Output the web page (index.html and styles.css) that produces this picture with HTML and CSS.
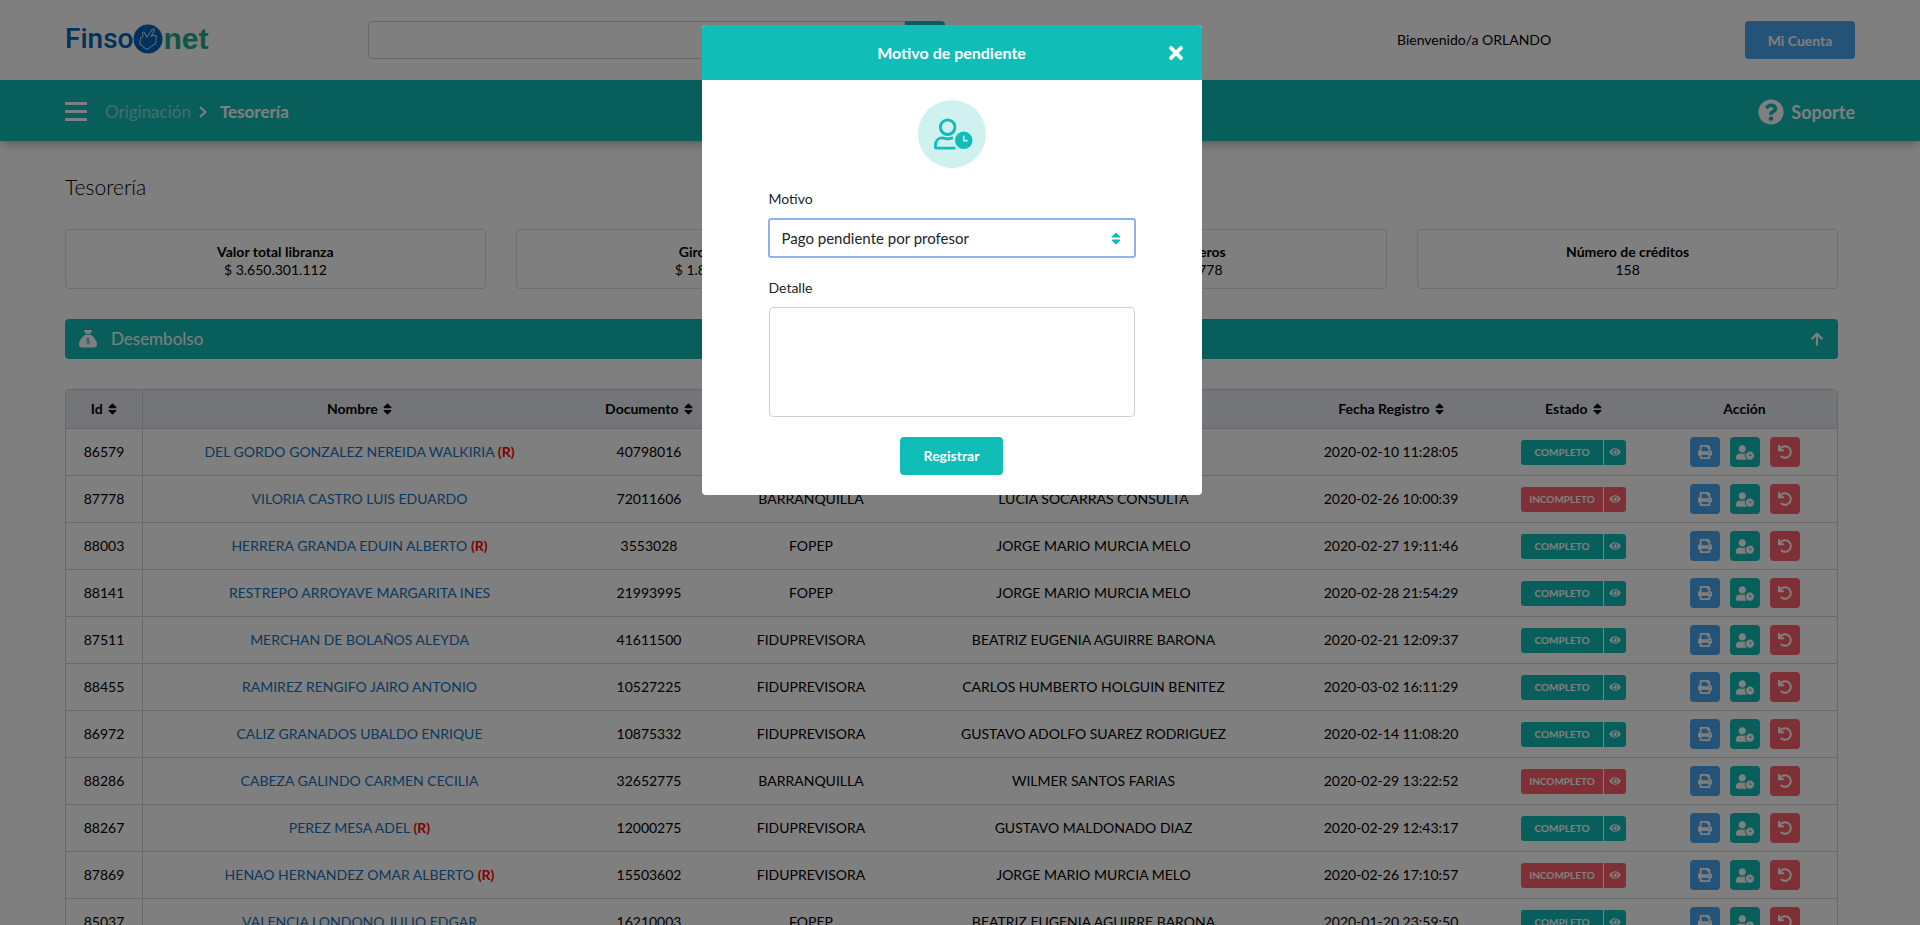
FILE: index.html
```html
<!DOCTYPE html>
<html lang="es">
<head>
<meta charset="utf-8">
<title>Finsonet - Tesorería</title>
<link rel="stylesheet" href="styles.css">
</head>
<body>
<svg class="sprite" aria-hidden="true">
  <symbol id="sort" viewBox="0 0 320 512"><path d="M41 288h238c21.4 0 32.1 25.9 17 41L177 448c-9.4 9.4-24.6 9.4-33.9 0L24 329c-15.1-15.1-4.4-41 17-41zm255-105L177 64c-9.4-9.4-24.6-9.4-33.9 0L24 183c-15.1 15.1-4.4 41 17 41h238c21.4 0 32.1-25.9 17-41z"/></symbol>
  <symbol id="eye" viewBox="0 0 576 512"><path d="M572.52 241.4C518.29 135.59 410.93 64 288 64S57.68 135.64 3.48 241.41a32.35 32.35 0 0 0 0 29.19C57.71 376.41 165.07 448 288 448s230.32-71.64 284.52-177.41a32.35 32.35 0 0 0 0-29.19zM288 400a144 144 0 1 1 144-144 143.93 143.93 0 0 1-144 144zm0-240a95.31 95.31 0 0 0-25.31 3.79 47.85 47.85 0 0 1-66.9 66.9A95.78 95.78 0 1 0 288 160z"/></symbol>
  <symbol id="print" viewBox="0 0 512 512"><path d="M448 192V77.25c0-8.49-3.37-16.62-9.37-22.63L393.37 9.37c-6-6-14.14-9.37-22.63-9.37H96C78.33 0 64 14.33 64 32v160c-35.35 0-64 28.65-64 64v112c0 8.84 7.16 16 16 16h48v96c0 17.67 14.33 32 32 32h320c17.67 0 32-14.33 32-32v-96h48c8.84 0 16-7.16 16-16V256c0-35.35-28.65-64-64-64zm-64 256H128v-96h256v96zm0-224H128V64h192v48c0 8.84 7.16 16 16 16h48v96zm48 72c-13.25 0-24-10.75-24-24 0-13.26 10.75-24 24-24s24 10.74 24 24c0 13.25-10.75 24-24 24z"/></symbol>
  <symbol id="clock" viewBox="0 0 640 512"><path d="M496 224c-79.6 0-144 64.4-144 144s64.4 144 144 144 144-64.4 144-144-64.4-144-144-144zm64 150.3c0 5.3-4.4 9.7-9.7 9.7h-60.6c-5.3 0-9.7-4.4-9.7-9.7v-76.6c0-5.3 4.4-9.7 9.7-9.7h12.6c5.3 0 9.7 4.4 9.7 9.7V352h38.3c5.3 0 9.7 4.4 9.7 9.7v12.6zM320 368c0-27.8 6.7-54.1 18.2-77.5-8-1.5-16.2-2.5-24.6-2.5h-16.7c-22.2 10.2-46.9 16-72.9 16s-50.6-5.8-72.9-16h-16.7C60.2 288 0 348.2 0 422.4V464c0 26.5 21.5 48 48 48h347.1c-45.3-31.9-75.1-84.5-75.1-144zm-96-112c70.7 0 128-57.3 128-128S294.7 0 224 0 96 57.3 96 128s57.3 128 128 128z"/></symbol>
  <symbol id="undo" viewBox="0 0 512 512"><path d="M212.333 224.333H12c-6.627 0-12-5.373-12-12V12C0 5.373 5.373 0 12 0h48c6.627 0 12 5.373 12 12v78.112C117.773 39.279 184.26 7.47 258.175 8.007c136.906.994 246.448 111.623 246.157 248.532C504.041 393.258 393.12 504 256.333 504c-64.089 0-122.496-24.313-166.51-64.215-5.099-4.622-5.334-12.554-.467-17.42l33.967-33.967c4.474-4.474 11.662-4.717 16.401-.525C170.76 415.336 211.58 432 256.333 432c97.268 0 176-78.716 176-176 0-97.267-78.716-176-176-176-58.496 0-110.28 28.476-142.274 72.333h98.274c6.627 0 12 5.373 12 12v48c0 6.627-5.373 12-12 12z"/></symbol>
</svg>

<header class="topbar">
  <a class="logo" href="#" aria-label="Finsonet">
    <span class="logo-a">Finso</span>
    <svg class="logo-mark" viewBox="0 0 30 30"><circle cx="15" cy="15" r="14.500" fill="#0062b4"/><path d="M13.500 13.500 19.500 5.200q1.800-1 2 .8L18 12.500l1.500-1.500q1.500-.5 1.700 1.200l1.500-.6q1 .4.600 2l-.8 6-8.500 6-7-5.600.5-5.500 2.500-2.500-.5-3q1.500-1.500 2.500 0l1.500 3.500" fill="none" stroke="#e4f0fa" stroke-width="1.100" stroke-dasharray="1.600 .5"/></svg>
    <span class="logo-b">net</span>
  </a>
  <form class="search">
    <input class="search-input" type="text" aria-label="Buscar">
    <button class="search-button" type="button" aria-label="Buscar"></button>
  </form>
  <p class="welcome">Bienvenido/a ORLANDO</p>
  <button class="account" type="button">Mi Cuenta</button>
</header>

<nav class="navbar">
  <button class="burger" type="button" aria-label="Menú"><span></span><span></span><span></span></button>
  <a class="crumb" href="#">Originación</a>
  <svg class="chevron" viewBox="0 0 8 12"><path d="M1 1l5.500 5L1 11" fill="none" stroke="currentColor" stroke-width="2"/></svg>
  <a class="crumb-current" href="#">Tesorería</a>
  <a class="support" href="#">
    <svg class="support-icon" viewBox="0 0 512 512"><path fill="currentColor" d="M504 256c0 136.997-111.043 248-248 248S8 392.997 8 256C8 119.083 119.043 8 256 8s248 111.083 248 248zM262.655 90c-54.497 0-89.255 22.957-116.549 63.758-3.536 5.286-2.353 12.415 2.715 16.258l34.699 26.31c5.205 3.947 12.621 3.008 16.665-2.122 17.864-22.658 30.113-35.797 57.303-35.797 20.429 0 45.698 13.148 45.698 32.958 0 14.976-12.363 22.667-32.534 33.976C247.128 238.528 216 254.941 216 296v4c0 6.627 5.373 12 12 12h56c6.627 0 12-5.373 12-12v-1.333c0-28.462 83.186-29.647 83.186-106.667 0-58.002-60.165-102-116.531-102zM256 338c-25.365 0-46 20.635-46 46 0 25.364 20.635 46 46 46s46-20.636 46-46c0-25.365-20.635-46-46-46z"/></svg>
    Soporte
  </a>
</nav>

<main class="content">
  <h1 class="title">Tesorería</h1>
  <section class="cards">
    <div class="card"><strong>Valor total libranza</strong><span>$ 3.650.301.112</span></div>
    <div class="card"><strong>Giros a clientes</strong><span>$ 1.850.301.334</span></div>
    <div class="card"><strong>Giros a terceros</strong><span>$ 799.999.778</span></div>
    <div class="card"><strong>Número de créditos</strong><span>158</span></div>
  </section>

  <button class="section-bar" type="button">
    <svg class="sack" viewBox="0 0 17 17"><path fill="currentColor" d="M4.500 0h8l-1.800 3.500H6.300zM6 4.500h5c3 2 6 5.500 6 9 0 2-1 3-2.500 3h-12C1 16.500 0 15.500 0 13.500c0-3.500 3-7 6-9z"/><path d="M10 8.700C9.500 8 7.300 8 7.300 9.300c0 1.300 2.700.8 2.700 2.100 0 1.300-2.200 1.300-2.900.4M8.600 7v6.800" fill="none" stroke="#10bdb7" stroke-width=".8"/></svg>
    <span>Desembolso</span>
    <svg class="arrow" viewBox="0 0 14 14"><path d="M7 13.500V2M1.500 7.200L7 1.700l5.500 5.500" fill="none" stroke="currentColor" stroke-width="2.200"/></svg>
  </button>

  <div class="table-wrap">
  <table class="table">
    <colgroup><col class="c-id"><col class="c-name"><col class="c-doc"><col class="c-pay"><col class="c-adviser"><col class="c-date"><col class="c-state"><col class="c-action"></colgroup>
    <thead>
      <tr>
        <th>Id <svg class="sort"><use href="#sort"/></svg></th>
        <th>Nombre <svg class="sort"><use href="#sort"/></svg></th>
        <th>Documento <svg class="sort"><use href="#sort"/></svg></th>
        <th>Pagaduría <svg class="sort"><use href="#sort"/></svg></th>
        <th>Asesor <svg class="sort"><use href="#sort"/></svg></th>
        <th>Fecha Registro <svg class="sort"><use href="#sort"/></svg></th>
        <th>Estado <svg class="sort"><use href="#sort"/></svg></th>
        <th>Acción</th>
      </tr>
    </thead>
    <tbody>
      <tr><td>86579</td><td><a href="#">DEL GORDO GONZALEZ NEREIDA WALKIRIA</a> <b>(R)</b></td><td>40798016</td><td>FOPEP</td><td>JORGE MARIO MURCIA MELO</td><td>2020-02-10 11:28:05</td>
        <td><div class="state"><span>COMPLETO</span><button type="button" aria-label="Ver"><svg><use href="#eye"/></svg></button></div></td>
        <td><div class="actions"><button class="blue" type="button" aria-label="Imprimir"><svg><use href="#print"/></svg></button><button class="teal" type="button" aria-label="Pendiente"><svg class="wide"><use href="#clock"/></svg></button><button class="red" type="button" aria-label="Devolver"><svg><use href="#undo"/></svg></button></div></td></tr>
      <tr><td>87778</td><td><a href="#">VILORIA CASTRO LUIS EDUARDO</a></td><td>72011606</td><td>BARRANQUILLA</td><td>LUCIA SOCARRAS CONSULTA</td><td>2020-02-26 10:00:39</td>
        <td><div class="state bad"><span>INCOMPLETO</span><button type="button" aria-label="Ver"><svg><use href="#eye"/></svg></button></div></td>
        <td><div class="actions"><button class="blue" type="button" aria-label="Imprimir"><svg><use href="#print"/></svg></button><button class="teal" type="button" aria-label="Pendiente"><svg class="wide"><use href="#clock"/></svg></button><button class="red" type="button" aria-label="Devolver"><svg><use href="#undo"/></svg></button></div></td></tr>
      <tr><td>88003</td><td><a href="#">HERRERA GRANDA EDUIN ALBERTO</a> <b>(R)</b></td><td>3553028</td><td>FOPEP</td><td>JORGE MARIO MURCIA MELO</td><td>2020-02-27 19:11:46</td>
        <td><div class="state"><span>COMPLETO</span><button type="button" aria-label="Ver"><svg><use href="#eye"/></svg></button></div></td>
        <td><div class="actions"><button class="blue" type="button" aria-label="Imprimir"><svg><use href="#print"/></svg></button><button class="teal" type="button" aria-label="Pendiente"><svg class="wide"><use href="#clock"/></svg></button><button class="red" type="button" aria-label="Devolver"><svg><use href="#undo"/></svg></button></div></td></tr>
      <tr><td>88141</td><td><a href="#">RESTREPO ARROYAVE MARGARITA INES</a></td><td>21993995</td><td>FOPEP</td><td>JORGE MARIO MURCIA MELO</td><td>2020-02-28 21:54:29</td>
        <td><div class="state"><span>COMPLETO</span><button type="button" aria-label="Ver"><svg><use href="#eye"/></svg></button></div></td>
        <td><div class="actions"><button class="blue" type="button" aria-label="Imprimir"><svg><use href="#print"/></svg></button><button class="teal" type="button" aria-label="Pendiente"><svg class="wide"><use href="#clock"/></svg></button><button class="red" type="button" aria-label="Devolver"><svg><use href="#undo"/></svg></button></div></td></tr>
      <tr><td>87511</td><td><a href="#">MERCHAN DE BOLAÑOS ALEYDA</a></td><td>41611500</td><td>FIDUPREVISORA</td><td>BEATRIZ EUGENIA AGUIRRE BARONA</td><td>2020-02-21 12:09:37</td>
        <td><div class="state"><span>COMPLETO</span><button type="button" aria-label="Ver"><svg><use href="#eye"/></svg></button></div></td>
        <td><div class="actions"><button class="blue" type="button" aria-label="Imprimir"><svg><use href="#print"/></svg></button><button class="teal" type="button" aria-label="Pendiente"><svg class="wide"><use href="#clock"/></svg></button><button class="red" type="button" aria-label="Devolver"><svg><use href="#undo"/></svg></button></div></td></tr>
      <tr><td>88455</td><td><a href="#">RAMIREZ RENGIFO JAIRO ANTONIO</a></td><td>10527225</td><td>FIDUPREVISORA</td><td>CARLOS HUMBERTO HOLGUIN BENITEZ</td><td>2020-03-02 16:11:29</td>
        <td><div class="state"><span>COMPLETO</span><button type="button" aria-label="Ver"><svg><use href="#eye"/></svg></button></div></td>
        <td><div class="actions"><button class="blue" type="button" aria-label="Imprimir"><svg><use href="#print"/></svg></button><button class="teal" type="button" aria-label="Pendiente"><svg class="wide"><use href="#clock"/></svg></button><button class="red" type="button" aria-label="Devolver"><svg><use href="#undo"/></svg></button></div></td></tr>
      <tr><td>86972</td><td><a href="#">CALIZ GRANADOS UBALDO ENRIQUE</a></td><td>10875332</td><td>FIDUPREVISORA</td><td>GUSTAVO ADOLFO SUAREZ RODRIGUEZ</td><td>2020-02-14 11:08:20</td>
        <td><div class="state"><span>COMPLETO</span><button type="button" aria-label="Ver"><svg><use href="#eye"/></svg></button></div></td>
        <td><div class="actions"><button class="blue" type="button" aria-label="Imprimir"><svg><use href="#print"/></svg></button><button class="teal" type="button" aria-label="Pendiente"><svg class="wide"><use href="#clock"/></svg></button><button class="red" type="button" aria-label="Devolver"><svg><use href="#undo"/></svg></button></div></td></tr>
      <tr><td>88286</td><td><a href="#">CABEZA GALINDO CARMEN CECILIA</a></td><td>32652775</td><td>BARRANQUILLA</td><td>WILMER SANTOS FARIAS</td><td>2020-02-29 13:22:52</td>
        <td><div class="state bad"><span>INCOMPLETO</span><button type="button" aria-label="Ver"><svg><use href="#eye"/></svg></button></div></td>
        <td><div class="actions"><button class="blue" type="button" aria-label="Imprimir"><svg><use href="#print"/></svg></button><button class="teal" type="button" aria-label="Pendiente"><svg class="wide"><use href="#clock"/></svg></button><button class="red" type="button" aria-label="Devolver"><svg><use href="#undo"/></svg></button></div></td></tr>
      <tr><td>88267</td><td><a href="#">PEREZ MESA ADEL</a> <b>(R)</b></td><td>12000275</td><td>FIDUPREVISORA</td><td>GUSTAVO MALDONADO DIAZ</td><td>2020-02-29 12:43:17</td>
        <td><div class="state"><span>COMPLETO</span><button type="button" aria-label="Ver"><svg><use href="#eye"/></svg></button></div></td>
        <td><div class="actions"><button class="blue" type="button" aria-label="Imprimir"><svg><use href="#print"/></svg></button><button class="teal" type="button" aria-label="Pendiente"><svg class="wide"><use href="#clock"/></svg></button><button class="red" type="button" aria-label="Devolver"><svg><use href="#undo"/></svg></button></div></td></tr>
      <tr><td>87869</td><td><a href="#">HENAO HERNANDEZ OMAR ALBERTO</a> <b>(R)</b></td><td>15503602</td><td>FIDUPREVISORA</td><td>JORGE MARIO MURCIA MELO</td><td>2020-02-26 17:10:57</td>
        <td><div class="state bad"><span>INCOMPLETO</span><button type="button" aria-label="Ver"><svg><use href="#eye"/></svg></button></div></td>
        <td><div class="actions"><button class="blue" type="button" aria-label="Imprimir"><svg><use href="#print"/></svg></button><button class="teal" type="button" aria-label="Pendiente"><svg class="wide"><use href="#clock"/></svg></button><button class="red" type="button" aria-label="Devolver"><svg><use href="#undo"/></svg></button></div></td></tr>
      <tr><td>85037</td><td><a href="#">VALENCIA LONDONO JULIO EDGAR</a></td><td>16210003</td><td>FOPEP</td><td>BEATRIZ EUGENIA AGUIRRE BARONA</td><td>2020-01-20 23:59:50</td>
        <td><div class="state"><span>COMPLETO</span><button type="button" aria-label="Ver"><svg><use href="#eye"/></svg></button></div></td>
        <td><div class="actions"><button class="blue" type="button" aria-label="Imprimir"><svg><use href="#print"/></svg></button><button class="teal" type="button" aria-label="Pendiente"><svg class="wide"><use href="#clock"/></svg></button><button class="red" type="button" aria-label="Devolver"><svg><use href="#undo"/></svg></button></div></td></tr>
    </tbody>
  </table>
  </div>
</main>

<div class="overlay">
  <div class="modal" role="dialog" aria-labelledby="modal-title">
    <div class="modal-header">
      <h2 class="modal-title" id="modal-title">Motivo de pendiente</h2>
      <button class="close" type="button" aria-label="Cerrar"><svg viewBox="0 80 352 352"><path fill="currentColor" d="M242.720 256l100.070-100.070c12.280-12.280 12.280-32.190 0-44.480l-22.240-22.240c-12.280-12.280-32.190-12.280-44.480 0L176 189.280 75.930 89.210c-12.280-12.280-32.190-12.280-44.480 0L9.210 111.450c-12.280 12.280-12.280 32.190 0 44.480L109.280 256 9.210 356.070c-12.280 12.280-12.280 32.190 0 44.480l22.240 22.240c12.280 12.280 32.200 12.280 44.480 0L176 322.720l100.070 100.070c12.280 12.280 32.200 12.280 44.480 0l22.240-22.240c12.280-12.280 12.280-32.190 0-44.480z"/></svg></button>
    </div>
    <form class="modal-body">
      <span class="badge">
        <svg viewBox="0 0 40 32"><circle cx="14" cy="9" r="7.500" fill="none" stroke="currentColor" stroke-width="3"/><path d="M22 30.500H3q-1.500 0-1.500-1.500v-1.500c0-5 3.500-7.500 7-7.500 2.500 0 3 1 5.500 1s3-1 5.500-1" fill="none" stroke="currentColor" stroke-width="3"/><circle cx="30.500" cy="22.500" r="10.200" fill="#cff1f0"/><circle cx="30.500" cy="22.500" r="9" fill="currentColor"/><path d="M30.500 17.500v5.300h4" fill="none" stroke="#cff1f0" stroke-width="1.600"/></svg>
      </span>
      <label class="label" for="motivo">Motivo</label>
      <div class="select-wrap">
        <select class="select" id="motivo"><option>Pago pendiente por profesor</option></select>
        <svg class="select-icon"><use href="#sort"/></svg>
      </div>
      <label class="label" for="detalle">Detalle</label>
      <textarea class="textarea" id="detalle"></textarea>
      <button class="submit" type="button">Registrar</button>
    </form>
  </div>
</div>
</body>
</html>
```

FILE: styles.css
```css
* { box-sizing: border-box; }

body {
  margin: 0;
  height: 100vh;
  overflow: hidden;
  background: #fff;
  color: #000;
  font: 14px/18px Lato, "Open Sans", sans-serif;
}

button, input, select, textarea { font: inherit; margin: 0; }
button { border: 0; padding: 0; cursor: pointer; color: #fff; background: none; }
a { text-decoration: none; color: inherit; }
svg { fill: currentColor; }
.sprite { position: absolute; width: 0; height: 0; }

.topbar {
  display: grid;
  grid-template-columns: 303px 577px 1fr auto;
  align-items: center;
  height: 80px;
  padding: 0 65px;
}
.logo { display: flex; align-items: center; height: 32px; padding-bottom: 2px; }
.logo-a { font: 500 28px/32px Roboto, sans-serif; color: #0062b4; }
.logo-mark { width: 30px; height: 30px; }
.logo-b { font: 700 30px/32px "Liberation Sans", sans-serif; color: #20a88c; }
.search { display: flex; height: 38px; }
.search-input { flex: 1; min-width: 0; border: 1px solid #ced0d4; border-radius: 4px 0 0 4px; padding: 0 12px; }
.search-button { width: 40px; background: #10bdb7; border-radius: 0 4px 4px 0; }
.welcome { margin: 0; padding-left: 452px; }
.account { width: 110px; height: 38px; padding-top: 2px; border-radius: 4px; background: #4aa5ee; font-weight: 700; }

.navbar {
  display: flex;
  align-items: center;
  height: 61px;
  padding: 2px 65px 0;
  background: #10bdb7;
  color: #fff;
  font-size: 17px;
  box-shadow: 0 5px 10px -2px rgba(0, 0, 0, .3);
}
.burger { display: grid; gap: 5px; width: 22px; margin-right: 18px; }
.burger span { height: 3px; background: #fff; }
.crumb { opacity: .5; }
.chevron { width: 8px; height: 12px; margin: 0 13px 0 8px; }
.crumb-current { font-weight: 700; }
.support { display: flex; align-items: center; gap: 7px; margin-left: auto; font-size: 18px; font-weight: 700; }
.support-icon { width: 26px; height: 26px; }

.content { padding: 34px 82px 0 65px; }
.title { margin: 0 0 30px; font-size: 21px; line-height: 24px; font-weight: 300; }
.cards { display: grid; grid-template-columns: repeat(4, 1fr); gap: 30px; margin-bottom: 30px; }
.card { display: grid; height: 60px; padding: 13px 0 9px; border: 1px solid #dcdee2; border-radius: 4px; text-align: center; }
.section-bar {
  display: flex;
  align-items: center;
  width: 100%;
  height: 40px;
  margin-bottom: 30px;
  padding: 0 14px;
  border-radius: 4px;
  background: #10bdb7;
  font-size: 17px;
}
.sack { width: 18px; height: 18px; margin-right: 14px; }
.arrow { width: 14px; height: 14px; margin-left: auto; }

.table-wrap { border: 1px solid #d0d2d6; border-radius: 4px; overflow: hidden; }
.table { width: 100%; table-layout: fixed; border-collapse: separate; border-spacing: 0; text-align: center; }
.c-id { width: 77px; }
.c-name { width: 433px; }
.c-doc { width: 146px; }
.c-pay { width: 178px; }
.c-adviser { width: 387px; }
.c-date { width: 208px; }
.c-state { width: 157px; }
.c-action { width: 185px; }
.table th, .table td { padding: 0; border-bottom: 1px solid #d0d2d6; }
.table th { height: 39px; background: #e9ebf0; }
.table td { height: 47px; }
.table th:first-child, .table td:first-child { border-right: 1px solid #d0d2d6; }
.table a { color: #1670b8; }
.table b { color: #f00; }
.sort { width: 9px; height: 14px; margin-left: 2px; vertical-align: -2px; }
.state { display: inline-flex; gap: 1px; vertical-align: middle; color: #fff; font-size: 10px; line-height: 25px; font-weight: 700; }
.state span { width: 82px; border-radius: 3px 0 0 3px; background: #10bdb7; }
.state button { display: grid; place-items: center; width: 22px; border-radius: 0 3px 3px 0; background: #10bdb7; }
.state svg { width: 12px; height: 10px; }
.state.bad span, .state.bad button { background: #ff606c; }
.actions { display: flex; justify-content: center; gap: 10px; }
.actions button { display: grid; place-items: center; width: 30px; height: 30px; border-radius: 4px; }
.actions svg { width: 14px; height: 14px; }
.actions .wide { width: 18px; height: 15px; }
.actions .blue { background: #4aa5ee; }
.actions .teal { background: #10bdb7; }
.actions .red { background: #ff606c; }

.overlay {
  position: fixed;
  inset: 0;
  display: flex;
  justify-content: center;
  align-items: flex-start;
  padding: 25px 17px 25px 0;
  background: rgba(0, 0, 0, .5);
}
.modal { width: 500px; border-radius: 4px; background: #fff; overflow: hidden; }
.modal-header { display: grid; grid-template-columns: 1fr auto 1fr; align-items: center; height: 55px; padding: 0 19px; background: #10bdb7; color: #fff; }
.modal-title { grid-column: 2; margin: 0; font-size: 16px; line-height: 20px; font-weight: 700; }
.close { justify-self: end; width: 14px; height: 14px; }
.close svg { display: block; width: 14px; height: 14px; }
.modal-body { display: flex; flex-direction: column; padding: 20px 66px; }
.badge { display: grid; place-items: center; align-self: center; width: 68px; height: 68px; margin-bottom: 22px; padding-left: 3px; border-radius: 50%; background: #cff1f0; color: #10bdb7; }
.badge svg { width: 39px; height: 32px; }
.label { margin-bottom: 10px; padding-left: 1px; color: #212529; }
.select-wrap { position: relative; display: grid; margin-bottom: 21px; }
.select { height: 40px; padding: 0 12px; border: 2px solid #8db2f2; border-radius: 3px; background: #fff; color: #212529; font-size: 15px; appearance: none; outline: 0; }
.select-icon { position: absolute; right: 15px; top: 13px; width: 10px; height: 15px; color: #10bdb7; }
.textarea { height: 110px; margin: 0 1px 20px; border: 1px solid #ced0d4; border-radius: 4px; resize: none; }
.submit { align-self: center; width: 103px; height: 38px; border-radius: 4px; background: #10bdb7; font-weight: 700; }
```
